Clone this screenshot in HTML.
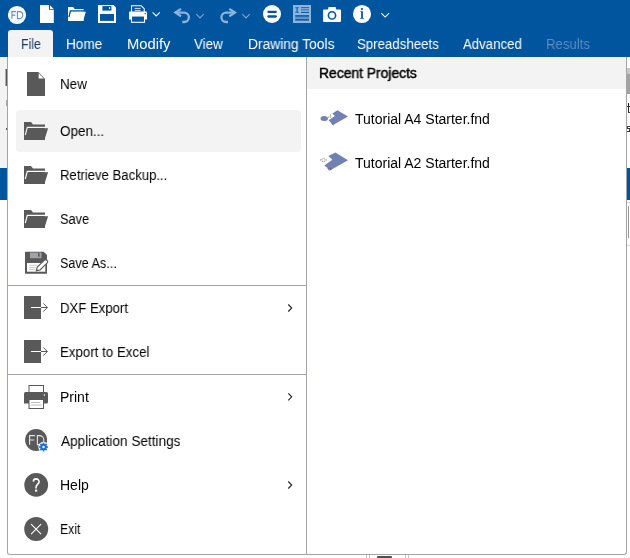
<!DOCTYPE html>
<html><head><meta charset="utf-8">
<style>
*{margin:0;padding:0;box-sizing:border-box}
html,body{width:630px;height:558px;overflow:hidden;background:#fff;position:relative;font-family:"Liberation Sans",sans-serif}
.a{position:absolute}
.t{position:absolute;font-size:14px;line-height:14px;white-space:nowrap;color:#000;transform-origin:0 0;will-change:transform}
.tab{color:#fff}
svg{position:absolute;overflow:visible}
</style></head><body>
<!-- top blue bar -->
<div class="a" style="left:0;top:0;width:630px;height:57px;background:#00559f"></div>
<!-- background app strips -->
<div class="a" style="left:0;top:57px;width:7px;height:111px;background:#f3f3f3"></div>
<div class="a" style="left:0;top:168px;width:7px;height:32px;background:#00559f"></div>
<div class="a" style="left:627px;top:168px;width:3px;height:32px;background:#00559f"></div>

<!-- bg app details -->
<div class="a" style="left:627px;top:68px;width:3px;height:6px;background:#c9c9c9"></div>
<div class="a" style="left:627px;top:74px;width:3px;height:20px;background:#a3a3a3"></div>
<div class="a" style="left:628px;top:103px;width:1px;height:10px;background:#222"></div>
<div class="a" style="left:627px;top:106px;width:3px;height:1px;background:#333"></div>
<div class="a" style="left:628px;top:112px;width:2px;height:1px;background:#444"></div>
<div class="a" style="left:627px;top:126px;width:3px;height:1px;background:#444"></div><div class="a" style="left:627px;top:127px;width:1px;height:1px;background:#444"></div><div class="a" style="left:627px;top:128px;width:3px;height:1px;background:#333"></div><div class="a" style="left:629px;top:129px;width:1px;height:2px;background:#444"></div><div class="a" style="left:627px;top:131px;width:3px;height:1px;background:#333"></div>
<div class="a" style="left:627px;top:202px;width:3px;height:1px;background:#d8d8d8"></div>
<div class="a" style="left:628px;top:206px;width:1px;height:32px;background:#9a9a9a"></div>
<div class="a" style="left:627px;top:245px;width:3px;height:1px;background:#d8d8d8"></div>
<div class="a" style="left:5px;top:69px;width:1px;height:17px;background:#b0b0b0"></div><div class="a" style="left:6px;top:69px;width:1px;height:17px;background:#555"></div>
<div class="a" style="left:6px;top:100px;width:1px;height:6px;background:#a8a8a8"></div>
<div class="a" style="left:6px;top:128px;width:1px;height:2px;background:#555"></div>
<div class="a" style="left:366px;top:555px;width:1px;height:3px;background:#c8c8c8"></div>
<div class="a" style="left:369px;top:555px;width:1px;height:3px;background:#c8c8c8"></div>
<div class="a" style="left:377px;top:556px;width:15px;height:2px;background:#505050;border-radius:1px 1px 0 0"></div>
<div class="a" style="left:405px;top:555px;width:1px;height:3px;background:#c8c8c8"></div>
<div class="a" style="left:408px;top:555px;width:1px;height:3px;background:#c8c8c8"></div>

<!-- File tab -->
<div class="a" style="left:8px;top:30px;width:45px;height:28px;background:#f3f3f3;border-radius:3px 3px 0 0"></div>
<div class="t" style="left:20.5px;top:37px;color:#173a66;transform:scaleX(0.881)">File</div>
<div class="t tab" style="left:66px;top:37px;transform:scaleX(0.972)">Home</div>
<div class="t tab" style="left:127px;top:37px;transform:scaleX(1.055)">Modify</div>
<div class="t tab" style="left:194px;top:37px;transform:scaleX(0.953)">View</div>
<div class="t tab" style="left:248px;top:37px;transform:scaleX(0.986)">Drawing Tools</div>
<div class="t tab" style="left:357px;top:37px;transform:scaleX(0.946)">Spreadsheets</div>
<div class="t tab" style="left:463px;top:37px;transform:scaleX(0.944)">Advanced</div>
<div class="t tab" style="left:546px;top:37px;color:#5f8cc0;transform:scaleX(0.94)">Results</div>

<!-- menu panel -->
<div class="a" style="left:7px;top:57px;width:620px;height:498px;border:1px solid #a3a3ab;border-top:none;border-radius:0 0 3px 3px;background:#fff"></div>
<div class="a" style="left:306px;top:57px;width:1px;height:497px;background:#a3a3ab"></div>
<div class="a" style="left:307px;top:57px;width:319px;height:32px;background:#f3f3f3"></div>
<div class="a" style="left:8px;top:285px;width:298px;height:1px;background:#a3a3ab"></div>
<div class="a" style="left:8px;top:374px;width:298px;height:1px;background:#a3a3ab"></div>
<!-- highlight -->
<div class="a" style="left:16px;top:110px;width:285px;height:42px;background:#f3f3f3;border-radius:4px"></div>

<!-- left items -->
<div class="t" style="left:60px;top:77px;transform:scaleX(0.959)">New</div>
<div class="t" style="left:60px;top:124px;transform:scaleX(0.961)">Open...</div>
<div class="t" style="left:60px;top:168px;transform:scaleX(0.938)">Retrieve Backup...</div>
<div class="t" style="left:60px;top:212px;transform:scaleX(0.917)">Save</div>
<div class="t" style="left:60px;top:256px;transform:scaleX(0.902)">Save As...</div>
<div class="t" style="left:60px;top:301px;transform:scaleX(0.939)">DXF Export</div>
<div class="t" style="left:60px;top:345px;transform:scaleX(0.95)">Export to Excel</div>
<div class="t" style="left:60px;top:390px;transform:scaleX(0.986)">Print</div>
<div class="t" style="left:61px;top:434px;transform:scaleX(0.971)">Application Settings</div>
<div class="t" style="left:60px;top:478px;transform:scaleX(0.993)">Help</div>
<div class="t" style="left:60px;top:522px;transform:scaleX(0.873)">Exit</div>

<!-- right -->
<div class="t" style="left:319px;top:66px;-webkit-text-stroke:0.45px #000;transform:scaleX(0.99)">Recent Projects</div>
<div class="t" style="left:355px;top:112px">Tutorial A4 Starter.fnd</div>
<div class="t" style="left:355px;top:156px">Tutorial A2 Starter.fnd</div>


<svg class="a" style="left:0;top:0" width="630" height="558" viewBox="0 0 630 558">
<!-- ===== toolbar ===== -->
<!-- FD circle -->
<circle cx="17" cy="15" r="9.1" fill="#fff"/>
<g fill="none" stroke="#5b8fc8" stroke-width="1.1">
<path d="M11.9 18.8V11.6H15.9M11.9 15.1H15.3"/>
<path d="M17.4 18.6V11.6H19.3A3.5 3.5 0 0 1 22.8 15.1A3.5 3.5 0 0 1 19.3 18.6Z"/>
</g>
<!-- new doc -->
<path d="M40 5H49V9.7H53.8V23H40Z" fill="#fff"/>
<path d="M50 5.2L53.7 8.9H50Z" fill="#fff"/>
<!-- folder -->
<g transform="translate(68,7) scale(0.74,0.775)">
<path d="M0 0H7L9 2.5H21V18H0Z" fill="#fff"/>
<path d="M21.5 5.3H3.3L1.3 13" fill="none" stroke="#00559f" stroke-width="1.9"/>
<path d="M4.3 6.2H24.1L20.4 18H0V14H2.2Z" fill="#fff"/>
</g>
<!-- save -->
<path d="M98 5H113.6L116 7.6V23H98Z" fill="#fff"/>
<rect x="102.4" y="6.1" width="9" height="4.5" fill="#00559f"/>
<rect x="109" y="7.1" width="1.1" height="2" fill="#fff"/>
<rect x="100" y="14" width="14" height="6.9" fill="#00559f"/>
<!-- print toolbar -->
<path d="M131.5 12V5.7H141.2L144.2 8.7V12" fill="none" stroke="#fff" stroke-width="1.1"/>
<rect x="134.6" y="7.9" width="6" height="1.1" fill="#b9d0ea"/>
<rect x="134.6" y="9.9" width="6" height="1.1" fill="#b9d0ea"/>
<path d="M130 11.5H146A1 1 0 0 1 147 12.5V19.5H129V12.5A1 1 0 0 1 130 11.5Z" fill="#fff"/>
<circle cx="145.2" cy="13.5" r="0.7" fill="#00559f"/>
<rect x="131.5" y="16" width="13" height="6.3" fill="#00559f" stroke="#fff" stroke-width="1.1"/>
<path d="M152.6 12.3L156.2 15.9L159.8 12.3" fill="none" stroke="#fff" stroke-width="1.05"/>
<!-- undo / redo -->
<g fill="none" stroke="#8fb4dc" stroke-width="2.3">
<path d="M181 8.9L175.4 12.6L181 16.3" stroke-linejoin="miter"/>
<path d="M175.5 12.6H184.2A4.7 4.7 0 0 1 184.2 22H182.3"/>
<path d="M229.3 8.9L234.9 12.6L229.3 16.3" stroke-linejoin="miter"/>
<path d="M234.8 12.6H226.1A4.7 4.7 0 0 0 226.1 22H228"/>
</g>
<g fill="none" stroke="#7fa6d3" stroke-width="1.05">
<path d="M196.3 14.2L200 17.9L203.7 14.2"/>
<path d="M242.3 14.2L246 17.9L249.7 14.2"/>
</g>
<!-- equal circle -->
<circle cx="272" cy="14" r="9" fill="#fff"/>
<g stroke="#00559f" stroke-width="2.3" stroke-linecap="round">
<path d="M268.4 11.8H275.8M268.4 16.5H275.8"/>
</g>
<!-- table icon -->
<rect x="293" y="5" width="18" height="18" fill="#8fb4da"/>
<g fill="#0f5da8">
<path d="M295.3 7.2H298.8V8.2H297.6V11.8H298.8V12.8H295.3V11.8H296.5V8.2H295.3Z"/>
<rect x="301" y="7.2" width="8" height="0.9"/>
<rect x="301" y="8.9" width="8" height="1.7" fill="#5087c2"/>
<rect x="301" y="11.9" width="8" height="1.1"/>
<rect x="295.2" y="15.1" width="13.8" height="1.7"/>
<rect x="295.2" y="17.2" width="13.8" height="1.4" fill="#5087c2"/>
<rect x="295.2" y="19" width="13.8" height="1.7"/>
</g>
<!-- camera -->
<path d="M324 9.5H327.9L328.6 7H335.6L336.3 9.5H340A1 1 0 0 1 341 10.5V21A1 1 0 0 1 340 22H324A1 1 0 0 1 323 21V10.5A1 1 0 0 1 324 9.5Z" fill="#fff"/>
<circle cx="332" cy="15.4" r="3.6" fill="none" stroke="#00559f" stroke-width="1.6"/>
<!-- info -->
<circle cx="362" cy="14" r="9.05" fill="#fff"/>
<circle cx="361.9" cy="9.1" r="1.15" fill="#00559f"/>
<path d="M360.3 11.2H362.9V17.9H363.9V18.8H360.1V17.9H361.1V12H360.3Z" fill="#00559f"/>
<path d="M381.3 13.1L385.2 17L389.1 13.1" fill="none" stroke="#fff" stroke-width="1.05"/>

<!-- ===== menu icons ===== -->
<g fill="#595959">
<!-- New -->
<path d="M27 72H38.3L45 78.7V96H27Z"/>
<path d="M38.7 73.3L43.9 78.6H38.7Z" fill="#fff"/>
<!-- folders -->
<g transform="translate(24,122)">
<path d="M0 0H7L9 2.5H21V18H0Z"/>
<path d="M21.5 5.3H3.3L1.3 13" fill="none" stroke="#f3f3f3" stroke-width="1.15"/>
<path d="M4.3 6.2H24.1L20.4 18H0V14H2.2Z"/>
</g>
<g transform="translate(24,166)">
<path d="M0 0H7L9 2.5H21V18H0Z"/>
<path d="M21.5 5.3H3.3L1.3 13" fill="none" stroke="#fff" stroke-width="1.15"/>
<path d="M4.3 6.2H24.1L20.4 18H0V14H2.2Z"/>
</g>
<g transform="translate(24,210)">
<path d="M0 0H7L9 2.5H21V18H0Z"/>
<path d="M21.5 5.3H3.3L1.3 13" fill="none" stroke="#fff" stroke-width="1.15"/>
<path d="M4.3 6.2H24.1L20.4 18H0V14H2.2Z"/>
</g>
<!-- Save As -->
<path d="M25 251.8H43.7L47 255.1V273.8H25Z"/>
<rect x="30" y="252.6" width="11.5" height="5.6" fill="#a2a2a8"/>
<rect x="38" y="253.2" width="1.6" height="3.4"/>
<rect x="27" y="263" width="18.3" height="8.7" fill="#fff"/>
<g stroke="#c8c8c8" stroke-width="0.9"><path d="M29.1 265.3H37.5M29.1 267.5H35.6M29.1 269.6H35"/></g>
<g transform="translate(36.3,270.8) rotate(-44)"><path d="M0 0L3.2 -2H13A2 2 0 0 1 13 2H3.2Z" fill="#fff" stroke="#595959" stroke-width="1.1"/><path d="M0 0L1.6 -1V1Z"/></g>
<!-- DXF export / Export to Excel -->
<rect x="24" y="296" width="17" height="23"/>
<path d="M31 307.5H47.3M43.3 303.4L47.4 307.5L43.3 311.6" fill="none" stroke="#fff" stroke-width="1"/>
<path d="M41 307.5H47.3M43.3 303.4L47.4 307.5L43.3 311.6" fill="none" stroke="#595959" stroke-width="1"/>
<rect x="24" y="340" width="17" height="23"/>
<path d="M31 351.5H47.3" fill="none" stroke="#fff" stroke-width="1"/>
<path d="M41 351.5H47.3M43.3 347.4L47.4 351.5L43.3 355.6" fill="none" stroke="#595959" stroke-width="1"/>
<!-- Print -->
<rect x="29" y="385.5" width="14.5" height="8" fill="none" stroke="#595959" stroke-width="1"/>
<path d="M25.5 392H46.5A1.5 1.5 0 0 1 48 393.5V402A1.5 1.5 0 0 1 46.5 403.5H24V393.5A1.5 1.5 0 0 1 25.5 392Z"/>
<circle cx="44.4" cy="395" r="0.8" fill="#fff"/>
<rect x="29" y="399.5" width="14.5" height="9" fill="#fff" stroke="#595959" stroke-width="1"/>
<path d="M31 402.5H40M31 405H41.5" stroke="#b0b0b0" stroke-width="0.9"/>
<!-- App settings -->
<circle cx="36.1" cy="440" r="11"/>
<g fill="none" stroke="#e6e6e6" stroke-width="1.1">
<path d="M29.6 444.8V435.6H34.9M29.6 440H34.3"/>
<path d="M37.4 444.6V435.6H39.4A4.5 4.5 0 0 1 43.9 440.1A4.5 4.5 0 0 1 39.4 444.6Z"/>
</g>
<!-- Help -->
<circle cx="36.2" cy="484.9" r="11.9"/>
<!-- Exit -->
<circle cx="36.2" cy="529" r="12"/>
</g>
<!-- gear -->
<g transform="translate(43.5,447)">
<circle r="5.2" fill="#fff"/>
<g fill="#1c6fcf">
<circle r="3.2"/>
<rect x="-0.85" y="-4.4" width="1.7" height="8.8"/>
<rect x="-0.85" y="-4.4" width="1.7" height="8.8" transform="rotate(45)"/>
<rect x="-0.85" y="-4.4" width="1.7" height="8.8" transform="rotate(90)"/>
<rect x="-0.85" y="-4.4" width="1.7" height="8.8" transform="rotate(135)"/>
</g>
<circle r="1.2" fill="#fff"/>
</g>
<!-- help glyph -->
<path d="M33.3 481.6A2.9 2.9 0 0 1 36.2 478.9A2.9 2.9 0 0 1 39.1 481.8C39.1 484 36 484.5 36 487.6V488.4" fill="none" stroke="#fff" stroke-width="1.6"/>
<rect x="35" y="489.6" width="2.2" height="2" fill="#fff"/>
<!-- exit X -->
<path d="M31.1 524.2L41.1 534.1M41.1 524.2L31.1 534.1" stroke="#fff" stroke-width="1.1"/>
<!-- chevrons -->
<g fill="none" stroke="#222" stroke-width="1.1">
<path d="M288.3 304.5L291.7 308L288.3 311.5"/>
<path d="M288.3 393.3L291.7 396.8L288.3 400.3"/>
<path d="M288.3 481.5L291.7 485L288.3 488.5"/>
</g>
<!-- project icons -->
<g fill="#7182b0">
<ellipse cx="324.2" cy="118.4" rx="3.7" ry="2.5"/>
<path d="M332.3 113.4L337.4 110.3L348 116.6L333.1 124.9L328.6 120.3L334.9 116Z"/>
<path d="M328.3 156L335.4 152.6L348 160.3L330.3 170.3L324.3 165.4L332.3 159.7Z"/>
</g>
<g fill="none" stroke="#555" stroke-width="0.8">
<path d="M327.8 117.8L329.2 116.6M329.8 115.6L331 114.7M330 117.3L331.3 116.5" stroke-width="0.7"/>
<path d="M331.6 123.4L333.4 125"/>
<path d="M320.5 160L323.4 158.3L326.5 160L323.4 161.9Z" stroke-dasharray="1.2 1"/>
<path d="M327.8 168L329.3 170.5M329.8 167.7L331.2 170.2"/>
</g>
</svg>
</body></html>
